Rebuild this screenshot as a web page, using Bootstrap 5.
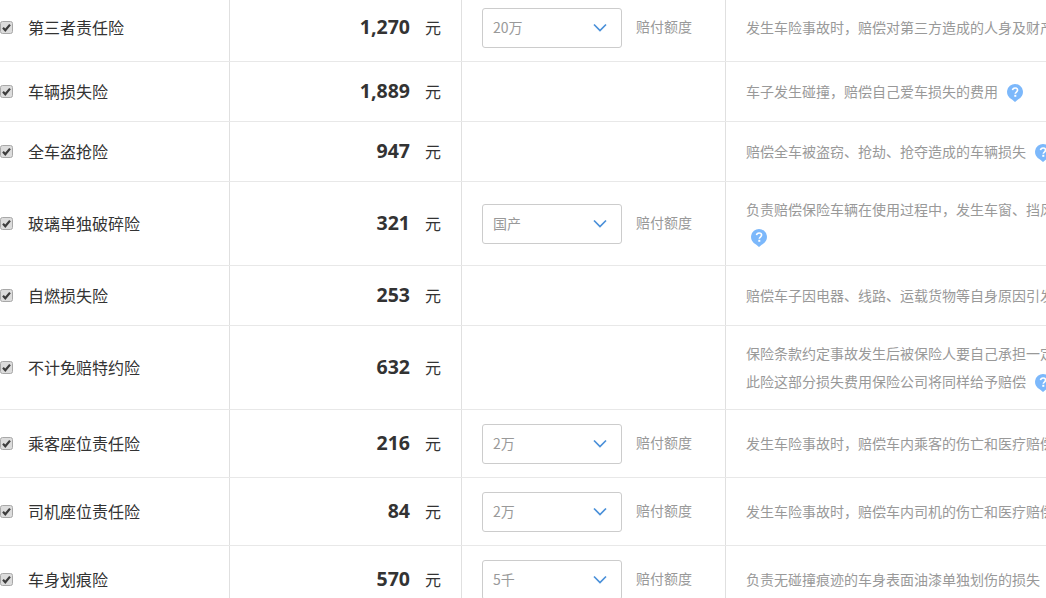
<!DOCTYPE html>
<html lang="zh-CN">
<head>
<meta charset="utf-8">
<title>车险</title>
<link rel="stylesheet" href="https://cdn.jsdelivr.net/npm/bootstrap@5.3.0/dist/css/bootstrap.min.css">
<style>
html,body{height:598px;overflow:hidden;background:#fff}
body{font-family:"Noto Sans CJK SC","Liberation Sans",sans-serif;color:#333}
.ins-list{margin-top:-6px;width:1300px}
.ins-row{border-bottom:1px solid #e8e8e8}
.ins-row.h60{height:60px}
.ins-row.h84{height:84px}
.ins-row.h68{height:68px}
.c-name{width:230px;border-right:1px solid #e0e0e0;font-size:16px;gap:15px;padding-bottom:2px}
.c-price{width:232px;border-right:1px solid #e0e0e0;padding-right:20px;font-size:16px;padding-bottom:2px}
.c-opt{width:264px;border-right:1px solid #e0e0e0;padding-left:20px;gap:14px;font-size:14px;color:#999}
.c-desc{flex:1;padding-left:20px;font-size:14px;line-height:28px;color:#999;white-space:nowrap;padding-bottom:2px}
.tick{width:13px;height:13px;display:block;flex:none;margin-top:2px}
.amt{font-family:"Open Sans","Liberation Sans",sans-serif;font-weight:700;font-size:19.5px;color:#333;margin-right:15px;line-height:1}
.pick{width:140px;height:40px;border:1px solid #ccc;border-radius:3px;padding:0 14px 0 10px;color:#999;font-size:14px}
.pick svg{width:14px;height:9px}
.lim{position:relative;top:-1px}
.tip{width:16px;height:18px;margin-left:6px;vertical-align:-5px}
.tip.solo{margin-left:5px;vertical-align:-4px}
</style>
</head>
<body>
<svg width="0" height="0" class="d-block position-absolute">
  <defs>
    <symbol id="tick" viewBox="0 0 13 13">
      <rect x=".5" y=".5" width="12" height="12" rx="2" fill="#dcdcdc" stroke="#a8a8a8"/>
      <path d="M3 6.8 5.3 9.3 10 3.6" fill="none" stroke="#3c3c3c" stroke-width="2.2"/>
    </symbol>
    <symbol id="chev" viewBox="0 0 14 9">
      <path d="M1 1.5 7 7.5 13 1.5" fill="none" stroke="#4a90d9" stroke-width="1.7"/>
    </symbol>
    <symbol id="ask" viewBox="0 0 16 18">
      <path d="M8 0a8 8 0 0 1 3 15.4L8 18l-3-2.600A8 8 0 0 1 8 0z" fill="#7cb8fb"/>
      <path d="M5.500 6.200C5.700 4.700 6.700 4 8.100 4c1.500 0 2.500.9 2.500 2.100 0 1.900-2.300 1.900-2.300 3.700" fill="none" stroke="#fff" stroke-width="1.600"/>
      <rect x="7.300" y="10.800" width="2" height="2" fill="#fff"/>
    </symbol>
  </defs>
</svg>
<main class="ins-list">

  <div class="ins-row h68 d-flex">
    <div class="c-name d-flex align-items-center"><svg class="tick"><use href="#tick"/></svg><span>第三者责任险</span></div>
    <div class="c-price d-flex align-items-center justify-content-end"><span class="amt">1,270</span><span>元</span></div>
    <div class="c-opt d-flex align-items-center"><div class="pick d-flex align-items-center justify-content-between"><span>20万</span><svg><use href="#chev"/></svg></div><span class="lim">赔付额度</span></div>
    <div class="c-desc d-flex align-items-center"><span>发生车险事故时，赔偿对第三方造成的人身及财产损失</span></div>
  </div>

  <div class="ins-row h60 d-flex">
    <div class="c-name d-flex align-items-center"><svg class="tick"><use href="#tick"/></svg><span>车辆损失险</span></div>
    <div class="c-price d-flex align-items-center justify-content-end"><span class="amt">1,889</span><span>元</span></div>
    <div class="c-opt d-flex align-items-center"></div>
    <div class="c-desc d-flex align-items-center"><span>车子发生碰撞，赔偿自己爱车损失的费用 <svg class="tip"><use href="#ask"/></svg></span></div>
  </div>

  <div class="ins-row h60 d-flex">
    <div class="c-name d-flex align-items-center"><svg class="tick"><use href="#tick"/></svg><span>全车盗抢险</span></div>
    <div class="c-price d-flex align-items-center justify-content-end"><span class="amt">947</span><span>元</span></div>
    <div class="c-opt d-flex align-items-center"></div>
    <div class="c-desc d-flex align-items-center"><span>赔偿全车被盗窃、抢劫、抢夺造成的车辆损失 <svg class="tip"><use href="#ask"/></svg></span></div>
  </div>

  <div class="ins-row h84 d-flex">
    <div class="c-name d-flex align-items-center"><svg class="tick"><use href="#tick"/></svg><span>玻璃单独破碎险</span></div>
    <div class="c-price d-flex align-items-center justify-content-end"><span class="amt">321</span><span>元</span></div>
    <div class="c-opt d-flex align-items-center"><div class="pick d-flex align-items-center justify-content-between"><span>国产</span><svg><use href="#chev"/></svg></div><span class="lim">赔付额度</span></div>
    <div class="c-desc d-flex align-items-center"><span>负责赔偿保险车辆在使用过程中，发生车窗、挡风玻璃单独破碎的损失<br><svg class="tip solo"><use href="#ask"/></svg></span></div>
  </div>

  <div class="ins-row h60 d-flex">
    <div class="c-name d-flex align-items-center"><svg class="tick"><use href="#tick"/></svg><span>自燃损失险</span></div>
    <div class="c-price d-flex align-items-center justify-content-end"><span class="amt">253</span><span>元</span></div>
    <div class="c-opt d-flex align-items-center"></div>
    <div class="c-desc d-flex align-items-center"><span>赔偿车子因电器、线路、运载货物等自身原因引发的火灾损失</span></div>
  </div>

  <div class="ins-row h84 d-flex">
    <div class="c-name d-flex align-items-center"><svg class="tick"><use href="#tick"/></svg><span>不计免赔特约险</span></div>
    <div class="c-price d-flex align-items-center justify-content-end"><span class="amt">632</span><span>元</span></div>
    <div class="c-opt d-flex align-items-center"></div>
    <div class="c-desc d-flex align-items-center"><span>保险条款约定事故发生后被保险人要自己承担一定比例的损失<br>此险这部分损失费用保险公司将同样给予赔偿 <svg class="tip"><use href="#ask"/></svg></span></div>
  </div>

  <div class="ins-row h68 d-flex">
    <div class="c-name d-flex align-items-center"><svg class="tick"><use href="#tick"/></svg><span>乘客座位责任险</span></div>
    <div class="c-price d-flex align-items-center justify-content-end"><span class="amt">216</span><span>元</span></div>
    <div class="c-opt d-flex align-items-center"><div class="pick d-flex align-items-center justify-content-between"><span>2万</span><svg><use href="#chev"/></svg></div><span class="lim">赔付额度</span></div>
    <div class="c-desc d-flex align-items-center"><span>发生车险事故时，赔偿车内乘客的伤亡和医疗赔偿费用</span></div>
  </div>

  <div class="ins-row h68 d-flex">
    <div class="c-name d-flex align-items-center"><svg class="tick"><use href="#tick"/></svg><span>司机座位责任险</span></div>
    <div class="c-price d-flex align-items-center justify-content-end"><span class="amt">84</span><span>元</span></div>
    <div class="c-opt d-flex align-items-center"><div class="pick d-flex align-items-center justify-content-between"><span>2万</span><svg><use href="#chev"/></svg></div><span class="lim">赔付额度</span></div>
    <div class="c-desc d-flex align-items-center"><span>发生车险事故时，赔偿车内司机的伤亡和医疗赔偿费用</span></div>
  </div>

  <div class="ins-row h68 d-flex">
    <div class="c-name d-flex align-items-center"><svg class="tick"><use href="#tick"/></svg><span>车身划痕险</span></div>
    <div class="c-price d-flex align-items-center justify-content-end"><span class="amt">570</span><span>元</span></div>
    <div class="c-opt d-flex align-items-center"><div class="pick d-flex align-items-center justify-content-between"><span>5千</span><svg><use href="#chev"/></svg></div><span class="lim">赔付额度</span></div>
    <div class="c-desc d-flex align-items-center"><span>负责无碰撞痕迹的车身表面油漆单独划伤的损失</span></div>
  </div>

</main>
<script src="https://cdn.jsdelivr.net/npm/bootstrap@5.3.0/dist/js/bootstrap.bundle.min.js"></script>
</body>
</html>
